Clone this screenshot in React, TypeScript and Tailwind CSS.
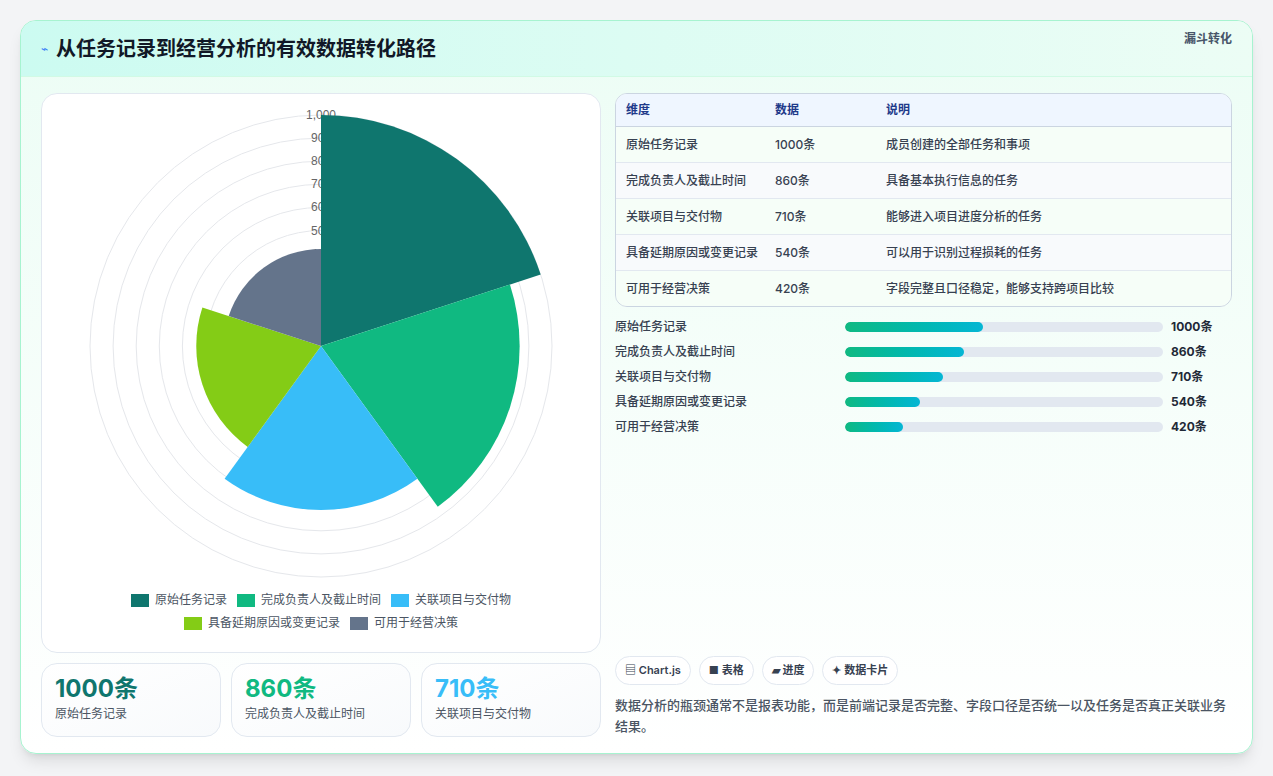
import React from 'react';

const rows = [
  { name: '原始任务记录', value: 1000, note: '成员创建的全部任务和事项', color: '#0f766e' },
  { name: '完成负责人及截止时间', value: 860, note: '具备基本执行信息的任务', color: '#10b981' },
  { name: '关联项目与交付物', value: 710, note: '能够进入项目进度分析的任务', color: '#38bdf8' },
  { name: '具备延期原因或变更记录', value: 540, note: '可以用于识别过程损耗的任务', color: '#84cc16' },
  { name: '可用于经营决策', value: 420, note: '字段完整且口径稳定，能够支持跨项目比较', color: '#64748b' },
];

const CX = 279;
const CY = 251;
const R = 231;

function wedge(i: number, v: number) {
  const r = (v / 1000) * R;
  const a0 = ((-90 + i * 72) * Math.PI) / 180;
  const a1 = ((-90 + (i + 1) * 72) * Math.PI) / 180;
  const x0 = CX + r * Math.cos(a0);
  const y0 = CY + r * Math.sin(a0);
  const x1 = CX + r * Math.cos(a1);
  const y1 = CY + r * Math.sin(a1);
  return `M${CX},${CY} L${x0},${y0} A${r},${r} 0 0 1 ${x1},${y1} Z`;
}

const PolarChart: React.FC = () => (
  <svg width="558" height="490" className="block">
    {[1, 2, 3, 4, 5, 6, 7, 8, 9, 10].map((k) => (
      <circle key={k} cx={CX} cy={CY} r={(k / 10) * R} fill="none" stroke="#e5e7eb" strokeWidth="1" />
    ))}
    {[1, 2, 3, 4, 5, 6, 7, 8, 9, 10].map((k) => (
      <text key={k} x={CX} y={CY - (k / 10) * R + 4} textAnchor="middle" fontSize="12" fill="#666" fontFamily="Liberation Sans, sans-serif">
        {k === 10 ? '1,000' : k * 100}
      </text>
    ))}
    {rows.map((r, i) => (
      <path key={r.name} d={wedge(i, r.value)} fill={r.color} />
    ))}
  </svg>
);

const App: React.FC = () => {
  return (
    <div className="w-[1273px] h-[776px] bg-[#f3f4f6] p-5 pb-[22px]" style={{ fontFamily: 'Inter, "Noto Sans CJK SC", sans-serif' }}>
      <div className="h-full rounded-2xl border border-[#a7f3d0] bg-gradient-to-b from-[#ecfdf5] to-white shadow-lg overflow-hidden flex flex-col">
        {/* Header */}
        <div className="h-14 flex items-center justify-between px-5 bg-gradient-to-r from-[#ccfbf1] to-[#ecfdf5] border-b border-[#d1fae5]">
          <div className="flex items-center gap-2">
            <span className="text-[#3b82f6] text-xs">⌁</span>
            <h1 className="text-[20px] font-bold text-[#111827]">从任务记录到经营分析的有效数据转化路径</h1>
          </div>
          <span className="text-xs font-semibold text-[#475569] -mt-5">漏斗转化</span>
        </div>

        <div className="flex-1 flex gap-[14px] px-5 pt-4 pb-4">
          {/* Left */}
          <div className="w-[560px] flex flex-col gap-[10px]">
            <div className="h-[560px] bg-white rounded-2xl border border-[#e2e8f0] flex flex-col items-center pt-[1px]">
              <PolarChart />
              <div className="flex flex-col items-center gap-[7px] text-xs text-[#4b5563] mt-[7px]">
                <div className="flex gap-[10px]">
                  {rows.slice(0, 3).map((r) => (
                    <span key={r.name} className="flex items-center gap-[6px]">
                      <span className="w-[18px] h-[13px] inline-block" style={{ background: r.color }} />
                      {r.name}
                    </span>
                  ))}
                </div>
                <div className="flex gap-[10px]">
                  {rows.slice(3).map((r) => (
                    <span key={r.name} className="flex items-center gap-[6px]">
                      <span className="w-[18px] h-[13px] inline-block" style={{ background: r.color }} />
                      {r.name}
                    </span>
                  ))}
                </div>
              </div>
            </div>
            <div className="grid grid-cols-3 gap-[10px]">
              {[
                { v: '1000条', l: '原始任务记录', c: 'text-[#0f766e]' },
                { v: '860条', l: '完成负责人及截止时间', c: 'text-[#10b981]' },
                { v: '710条', l: '关联项目与交付物', c: 'text-[#38bdf8]' },
              ].map((s) => (
                <div key={s.l} className="h-[74px] rounded-2xl border border-[#e2e8f0] bg-gradient-to-br from-white to-[#f8fafc] px-[13px] pt-[9px]">
                  <div className={`text-[24px] font-bold leading-[32px] ${s.c}`}>{s.v}</div>
                  <div className="text-xs text-[#4b5563] mt-[1px]">{s.l}</div>
                </div>
              ))}
            </div>
          </div>

          {/* Right */}
          <div className="flex-1 flex flex-col">
            <div className="rounded-xl border border-[#cbd5e1] overflow-hidden bg-white text-xs">
              <div className="grid grid-cols-[149px_111px_1fr] bg-[#eff6ff] h-[33px] items-center px-[10px] font-semibold text-[#1e3a8a] border-b border-[#cbd5e1]">
                <span>维度</span><span>数据</span><span>说明</span>
              </div>
              {rows.map((r, i) => (
                <div key={r.name} className={`grid grid-cols-[149px_111px_1fr] px-[10px] py-[9px] leading-[17px] text-[#374151] font-medium ${i % 2 === 0 ? 'bg-[#f0fdf4]/60' : 'bg-[#f8fafc]'} ${i < 4 ? 'border-b border-[#e2e8f0]' : ''}`}>
                  <span className="pr-2">{r.name}</span>
                  <span>{r.value}条</span>
                  <span>{r.note}</span>
                </div>
              ))}
            </div>
            <div className="flex flex-col gap-[9px] mt-[12px] text-xs text-[#374151]">
              {rows.map((r) => (
                <div key={r.name} className="flex items-center h-4">
                  <span className="w-[230px] font-medium">{r.name}</span>
                  <div className="w-[318px] h-[10px] rounded-full bg-[#e2e8f0] overflow-hidden">
                    <div className="h-full rounded-full bg-gradient-to-r from-[#10b981] to-[#06b6d4]" style={{ width: `${(r.value / 1000) * 43.5}%` }} />
                  </div>
                  <span className="ml-[8px] font-bold text-[#1f2937]">{r.value}条</span>
                </div>
              ))}
            </div>
            <div className="flex-1" />
            <div className="flex gap-[8px] text-[11px] font-semibold text-[#374151]">
              {['▤ Chart.js', '■ 表格', '▰ 进度', '✦ 数据卡片'].map((c) => (
                <span key={c} className="h-[29px] px-[9px] flex items-center rounded-full border border-[#e2e8f0] bg-white">{c}</span>
              ))}
            </div>
            <p className="mt-[10px] text-[13px] leading-[21px] text-[#4b5563] font-medium">
              数据分析的瓶颈通常不是报表功能，而是前端记录是否完整、字段口径是否统一以及任务是否真正关联业务结果。
            </p>
          </div>
        </div>
      </div>
    </div>
  );
};

export default App;
